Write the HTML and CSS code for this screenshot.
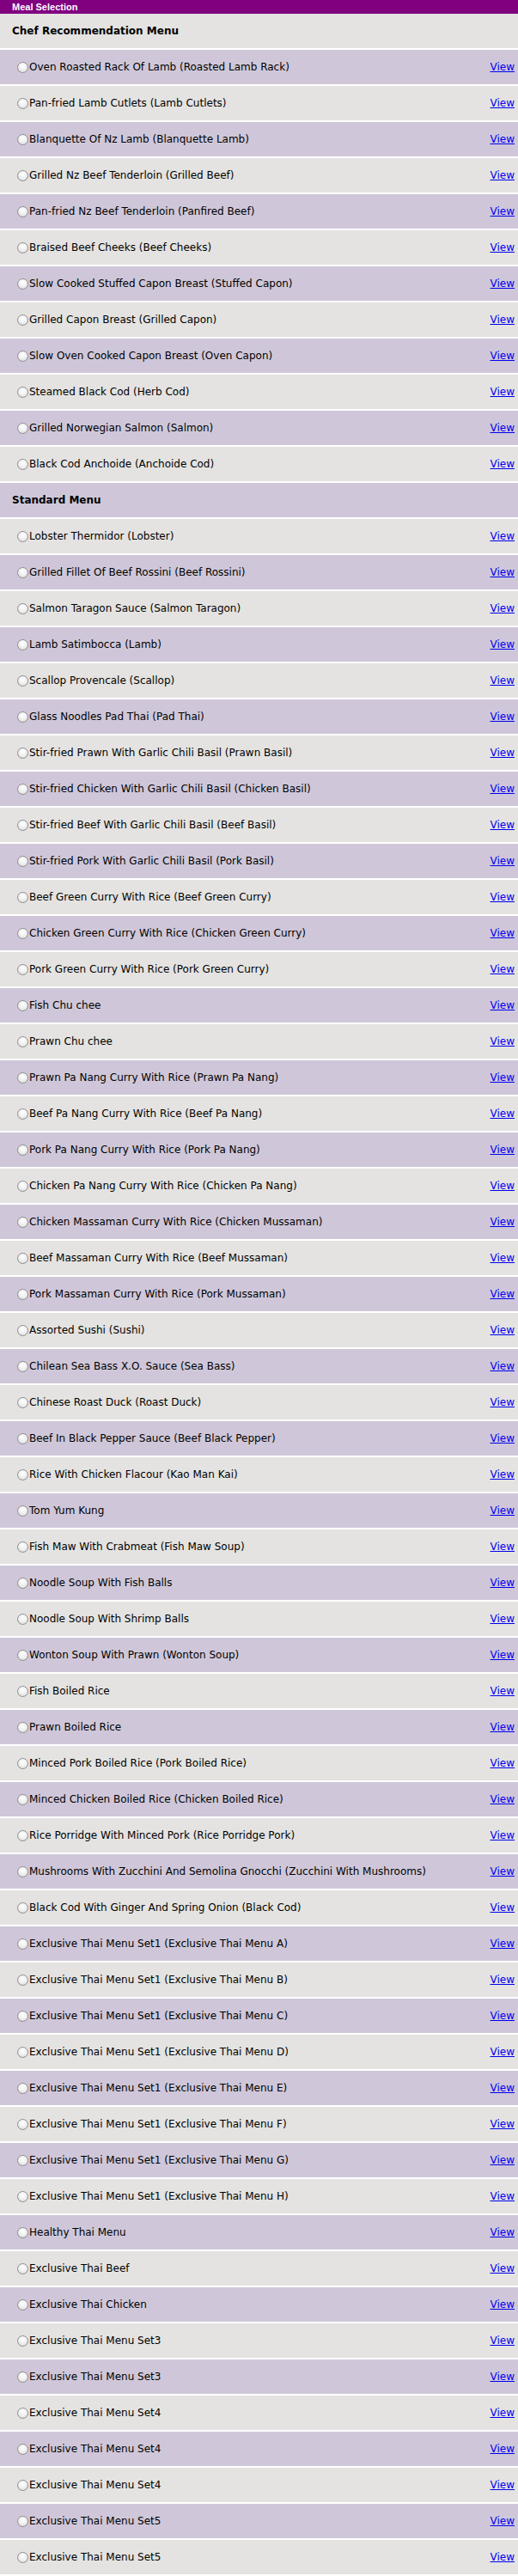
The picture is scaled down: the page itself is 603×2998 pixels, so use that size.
FILE: index.html
```html
<!DOCTYPE html>
<html>
<head>
<meta charset="utf-8">
<title>Meal Selection</title>
<link rel="stylesheet" href="styles.css">
</head>
<body>
<div class="titlebar">Meal Selection</div>
<div class="list">
  <div class="row section grey">Chef Recommendation Menu</div>
  <div class="row item purple"><span class="radio"></span><span class="name">Oven Roasted Rack Of Lamb (Roasted Lamb Rack)</span><a href="#" class="view">View</a></div>
  <div class="row item grey"><span class="radio"></span><span class="name">Pan-fried Lamb Cutlets (Lamb Cutlets)</span><a href="#" class="view">View</a></div>
  <div class="row item purple"><span class="radio"></span><span class="name">Blanquette Of Nz Lamb (Blanquette Lamb)</span><a href="#" class="view">View</a></div>
  <div class="row item grey"><span class="radio"></span><span class="name">Grilled Nz Beef Tenderloin (Grilled Beef)</span><a href="#" class="view">View</a></div>
  <div class="row item purple"><span class="radio"></span><span class="name">Pan-fried Nz Beef Tenderloin (Panfired Beef)</span><a href="#" class="view">View</a></div>
  <div class="row item grey"><span class="radio"></span><span class="name">Braised Beef Cheeks (Beef Cheeks)</span><a href="#" class="view">View</a></div>
  <div class="row item purple"><span class="radio"></span><span class="name">Slow Cooked Stuffed Capon Breast (Stuffed Capon)</span><a href="#" class="view">View</a></div>
  <div class="row item grey"><span class="radio"></span><span class="name">Grilled Capon Breast (Grilled Capon)</span><a href="#" class="view">View</a></div>
  <div class="row item purple"><span class="radio"></span><span class="name">Slow Oven Cooked Capon Breast (Oven Capon)</span><a href="#" class="view">View</a></div>
  <div class="row item grey"><span class="radio"></span><span class="name">Steamed Black Cod (Herb Cod)</span><a href="#" class="view">View</a></div>
  <div class="row item purple"><span class="radio"></span><span class="name">Grilled Norwegian Salmon (Salmon)</span><a href="#" class="view">View</a></div>
  <div class="row item grey"><span class="radio"></span><span class="name">Black Cod Anchoide (Anchoide Cod)</span><a href="#" class="view">View</a></div>
  <div class="row section purple">Standard Menu</div>
  <div class="row item grey"><span class="radio"></span><span class="name">Lobster Thermidor (Lobster)</span><a href="#" class="view">View</a></div>
  <div class="row item purple"><span class="radio"></span><span class="name">Grilled Fillet Of Beef Rossini (Beef Rossini)</span><a href="#" class="view">View</a></div>
  <div class="row item grey"><span class="radio"></span><span class="name">Salmon Taragon Sauce (Salmon Taragon)</span><a href="#" class="view">View</a></div>
  <div class="row item purple"><span class="radio"></span><span class="name">Lamb Satimbocca (Lamb)</span><a href="#" class="view">View</a></div>
  <div class="row item grey"><span class="radio"></span><span class="name">Scallop Provencale (Scallop)</span><a href="#" class="view">View</a></div>
  <div class="row item purple"><span class="radio"></span><span class="name">Glass Noodles Pad Thai (Pad Thai)</span><a href="#" class="view">View</a></div>
  <div class="row item grey"><span class="radio"></span><span class="name">Stir-fried Prawn With Garlic Chili Basil (Prawn Basil)</span><a href="#" class="view">View</a></div>
  <div class="row item purple"><span class="radio"></span><span class="name">Stir-fried Chicken With Garlic Chili Basil (Chicken Basil)</span><a href="#" class="view">View</a></div>
  <div class="row item grey"><span class="radio"></span><span class="name">Stir-fried Beef With Garlic Chili Basil (Beef Basil)</span><a href="#" class="view">View</a></div>
  <div class="row item purple"><span class="radio"></span><span class="name">Stir-fried Pork With Garlic Chili Basil (Pork Basil)</span><a href="#" class="view">View</a></div>
  <div class="row item grey"><span class="radio"></span><span class="name">Beef Green Curry With Rice (Beef Green Curry)</span><a href="#" class="view">View</a></div>
  <div class="row item purple"><span class="radio"></span><span class="name">Chicken Green Curry With Rice (Chicken Green Curry)</span><a href="#" class="view">View</a></div>
  <div class="row item grey"><span class="radio"></span><span class="name">Pork Green Curry With Rice (Pork Green Curry)</span><a href="#" class="view">View</a></div>
  <div class="row item purple"><span class="radio"></span><span class="name">Fish Chu chee</span><a href="#" class="view">View</a></div>
  <div class="row item grey"><span class="radio"></span><span class="name">Prawn Chu chee</span><a href="#" class="view">View</a></div>
  <div class="row item purple"><span class="radio"></span><span class="name">Prawn Pa Nang Curry With Rice (Prawn Pa Nang)</span><a href="#" class="view">View</a></div>
  <div class="row item grey"><span class="radio"></span><span class="name">Beef Pa Nang Curry With Rice (Beef Pa Nang)</span><a href="#" class="view">View</a></div>
  <div class="row item purple"><span class="radio"></span><span class="name">Pork Pa Nang Curry With Rice (Pork Pa Nang)</span><a href="#" class="view">View</a></div>
  <div class="row item grey"><span class="radio"></span><span class="name">Chicken Pa Nang Curry With Rice (Chicken Pa Nang)</span><a href="#" class="view">View</a></div>
  <div class="row item purple"><span class="radio"></span><span class="name">Chicken Massaman Curry With Rice (Chicken Mussaman)</span><a href="#" class="view">View</a></div>
  <div class="row item grey"><span class="radio"></span><span class="name">Beef Massaman Curry With Rice (Beef Mussaman)</span><a href="#" class="view">View</a></div>
  <div class="row item purple"><span class="radio"></span><span class="name">Pork Massaman Curry With Rice (Pork Mussaman)</span><a href="#" class="view">View</a></div>
  <div class="row item grey"><span class="radio"></span><span class="name">Assorted Sushi (Sushi)</span><a href="#" class="view">View</a></div>
  <div class="row item purple"><span class="radio"></span><span class="name">Chilean Sea Bass X.O. Sauce (Sea Bass)</span><a href="#" class="view">View</a></div>
  <div class="row item grey"><span class="radio"></span><span class="name">Chinese Roast Duck (Roast Duck)</span><a href="#" class="view">View</a></div>
  <div class="row item purple"><span class="radio"></span><span class="name">Beef In Black Pepper Sauce (Beef Black Pepper)</span><a href="#" class="view">View</a></div>
  <div class="row item grey"><span class="radio"></span><span class="name">Rice With Chicken Flacour (Kao Man Kai)</span><a href="#" class="view">View</a></div>
  <div class="row item purple"><span class="radio"></span><span class="name">Tom Yum Kung</span><a href="#" class="view">View</a></div>
  <div class="row item grey"><span class="radio"></span><span class="name">Fish Maw With Crabmeat (Fish Maw Soup)</span><a href="#" class="view">View</a></div>
  <div class="row item purple"><span class="radio"></span><span class="name">Noodle Soup With Fish Balls</span><a href="#" class="view">View</a></div>
  <div class="row item grey"><span class="radio"></span><span class="name">Noodle Soup With Shrimp Balls</span><a href="#" class="view">View</a></div>
  <div class="row item purple"><span class="radio"></span><span class="name">Wonton Soup With Prawn (Wonton Soup)</span><a href="#" class="view">View</a></div>
  <div class="row item grey"><span class="radio"></span><span class="name">Fish Boiled Rice</span><a href="#" class="view">View</a></div>
  <div class="row item purple"><span class="radio"></span><span class="name">Prawn Boiled Rice</span><a href="#" class="view">View</a></div>
  <div class="row item grey"><span class="radio"></span><span class="name">Minced Pork Boiled Rice (Pork Boiled Rice)</span><a href="#" class="view">View</a></div>
  <div class="row item purple"><span class="radio"></span><span class="name">Minced Chicken Boiled Rice (Chicken Boiled Rice)</span><a href="#" class="view">View</a></div>
  <div class="row item grey"><span class="radio"></span><span class="name">Rice Porridge With Minced Pork (Rice Porridge Pork)</span><a href="#" class="view">View</a></div>
  <div class="row item purple"><span class="radio"></span><span class="name">Mushrooms With Zucchini And Semolina Gnocchi (Zucchini With Mushrooms)</span><a href="#" class="view">View</a></div>
  <div class="row item grey"><span class="radio"></span><span class="name">Black Cod With Ginger And Spring Onion (Black Cod)</span><a href="#" class="view">View</a></div>
  <div class="row item purple"><span class="radio"></span><span class="name">Exclusive Thai Menu Set1 (Exclusive Thai Menu A)</span><a href="#" class="view">View</a></div>
  <div class="row item grey"><span class="radio"></span><span class="name">Exclusive Thai Menu Set1 (Exclusive Thai Menu B)</span><a href="#" class="view">View</a></div>
  <div class="row item purple"><span class="radio"></span><span class="name">Exclusive Thai Menu Set1 (Exclusive Thai Menu C)</span><a href="#" class="view">View</a></div>
  <div class="row item grey"><span class="radio"></span><span class="name">Exclusive Thai Menu Set1 (Exclusive Thai Menu D)</span><a href="#" class="view">View</a></div>
  <div class="row item purple"><span class="radio"></span><span class="name">Exclusive Thai Menu Set1 (Exclusive Thai Menu E)</span><a href="#" class="view">View</a></div>
  <div class="row item grey"><span class="radio"></span><span class="name">Exclusive Thai Menu Set1 (Exclusive Thai Menu F)</span><a href="#" class="view">View</a></div>
  <div class="row item purple"><span class="radio"></span><span class="name">Exclusive Thai Menu Set1 (Exclusive Thai Menu G)</span><a href="#" class="view">View</a></div>
  <div class="row item grey"><span class="radio"></span><span class="name">Exclusive Thai Menu Set1 (Exclusive Thai Menu H)</span><a href="#" class="view">View</a></div>
  <div class="row item purple"><span class="radio"></span><span class="name">Healthy Thai Menu</span><a href="#" class="view">View</a></div>
  <div class="row item grey"><span class="radio"></span><span class="name">Exclusive Thai Beef</span><a href="#" class="view">View</a></div>
  <div class="row item purple"><span class="radio"></span><span class="name">Exclusive Thai Chicken</span><a href="#" class="view">View</a></div>
  <div class="row item grey"><span class="radio"></span><span class="name">Exclusive Thai Menu Set3</span><a href="#" class="view">View</a></div>
  <div class="row item purple"><span class="radio"></span><span class="name">Exclusive Thai Menu Set3</span><a href="#" class="view">View</a></div>
  <div class="row item grey"><span class="radio"></span><span class="name">Exclusive Thai Menu Set4</span><a href="#" class="view">View</a></div>
  <div class="row item purple"><span class="radio"></span><span class="name">Exclusive Thai Menu Set4</span><a href="#" class="view">View</a></div>
  <div class="row item grey"><span class="radio"></span><span class="name">Exclusive Thai Menu Set4</span><a href="#" class="view">View</a></div>
  <div class="row item purple"><span class="radio"></span><span class="name">Exclusive Thai Menu Set5</span><a href="#" class="view">View</a></div>
  <div class="row item grey"><span class="radio"></span><span class="name">Exclusive Thai Menu Set5</span><a href="#" class="view">View</a></div>
</div>
</body>
</html>
```

FILE: styles.css
```css
html, body {
  margin: 0;
  padding: 0;
  background: #ffffff;
}
body {
  font-family: "DejaVu Sans", Verdana, sans-serif;
  font-size: 12px;
  color: #000;
}
.titlebar {
  height: 16px;
  line-height: 16px;
  background: #800080;
  color: #ffffff;
  font-family: "Liberation Sans", Arial, sans-serif;
  font-weight: bold;
  font-size: 11px;
  padding-left: 14px;
}
.list {
  display: flex;
  flex-direction: column;
}
.row {
  height: 40px;
  margin-bottom: 2px;
  display: flex;
  align-items: center;
}
.grey { background: #e4e3e1; }
.purple { background: #cfc7d9; }
.section {
  font-weight: bold;
  padding-left: 14px;
}
.item {
  padding-left: 20px;
  padding-right: 4px;
}
.radio {
  width: 11px;
  height: 11px;
  border-radius: 50%;
  border: 1px solid #8e8e8e;
  background: radial-gradient(circle at 50% 35%, #ffffff 0%, #f2f2f2 45%, #d4d4d4 100%);
  flex: none;
  margin-right: 1px;
}
.name {
  flex: 1;
  white-space: nowrap;
}
.view {
  color: #0000ee;
  text-decoration: underline;
}
```
